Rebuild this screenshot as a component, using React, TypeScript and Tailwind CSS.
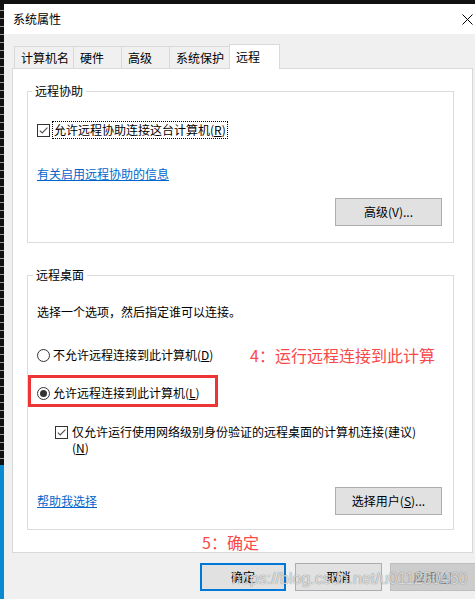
import type { ReactNode } from "react";

const CheckBox = () => (
  <span className="flex h-[13px] w-[13px] shrink-0 items-center justify-center border border-[#333333] bg-white">
    <svg width="11" height="11" viewBox="0 0 11 11">
      <path d="M1.8 5.6 L4.2 8 L9.4 2.6" fill="none" stroke="#555555" strokeWidth="1.2" />
    </svg>
  </span>
);

const Radio = ({ checked }: { checked?: boolean }) => (
  <span className="flex h-[13px] w-[13px] shrink-0 items-center justify-center rounded-full border border-[#333333] bg-white">
    {checked && <span className="h-[7px] w-[7px] rounded-full bg-[#333333]" />}
  </span>
);

const Btn = ({
  children,
  className = "",
  focused,
}: {
  children: ReactNode;
  className?: string;
  focused?: boolean;
}) => (
  <div
    className={
      "flex h-[28px] shrink-0 items-center justify-center bg-[#e1e1e1] leading-[16px] text-black " +
      (focused ? "border-2 border-[#0078d7] " : "border border-[#adadad] ") +
      className
    }
  >
    {children}
  </div>
);

const Tab = ({ label, w, active }: { label: string; w: string; active?: boolean }) =>
  active ? (
    <div className="relative z-10 -mb-px flex h-[25px] w-[51px] items-start border-x border-t border-[#d9d9d9] bg-white pl-[6px] pt-[4px] leading-[16px]">
      {label}
    </div>
  ) : (
    <div className={"flex h-[22px] items-center border-l border-t border-[#d9d9d9] bg-[#f0f0f0] pl-[6px] leading-[16px] " + w}>
      {label}
    </div>
  );

export default function App() {
  return (
    <div className="relative flex h-[599px] w-[475px] flex-col overflow-hidden bg-[#111111] font-['Noto_Sans_CJK_SC','Microsoft_YaHei',sans-serif] text-[12px] text-black">
      <div className="h-[4px] shrink-0" />
      <div className="flex min-h-0 flex-1">
        {/* desktop edge */}
        <div className="flex w-[4px] shrink-0 flex-col">
          <div className="flex-1 bg-[repeating-linear-gradient(to_bottom,#111111_0px,#111111_6px,#9a9a9a_6px,#9a9a9a_7px,#111111_7px,#111111_8px)]" />
          <div className="h-[134px] bg-[#0a8ad0]" />
        </div>

        {/* dialog */}
        <div className="flex flex-1 flex-col bg-[#f0f0f0]">
          <div className="flex h-[30px] shrink-0 items-center justify-between bg-white pl-[9px] pr-[3px] leading-[16px]">
            <span>系统属性</span>
            <svg width="11" height="11" viewBox="0 0 11 11">
              <path d="M0.5 0.5 L10.5 10.5 M10.5 0.5 L0.5 10.5" stroke="#000" strokeWidth="1" />
            </svg>
          </div>

          <div className="mt-[10px] flex h-[24px] items-end pl-[10px]">
            <Tab label="计算机名" w="w-[59px]" />
            <Tab label="硬件" w="w-[48px]" />
            <Tab label="高级" w="w-[48px]" />
            <Tab label="系统保护" w="w-[60px]" />
            <Tab label="远程" w="" active />
          </div>

          <div className="ml-[8px] h-[485px] w-[461px] border border-[#d9d9d9] bg-white">
            <fieldset className="ml-[14px] mt-[14px] w-[427px] border border-[#dcdcdc] pb-[16px]">
              <legend className="ml-[4px] px-[3px] leading-[16px]">远程协助</legend>
              <div className="mt-[22px] flex items-center pl-[9px]">
                <CheckBox />
                <span className="ml-[2px] border border-dotted border-black px-[1px] leading-[16px]">
                  允许远程协助连接这台计算机(<span className="underline">R</span>)
                </span>
              </div>
              <div className="mt-[27px] pl-[9px] leading-[16px]">
                <span className="text-[#0066cc] underline">有关启用远程协助的信息</span>
              </div>
              <div className="mt-[16px] flex justify-end pr-[11px]">
                <Btn className="w-[107px]">高级(V)...</Btn>
              </div>
            </fieldset>

            <fieldset className="ml-[14px] mt-[24px] w-[427px] border border-[#dcdcdc] pb-[14px]">
              <legend className="ml-[5px] px-[3px] leading-[16px]">远程桌面</legend>
              <div className="mt-[21px] pl-[9px] leading-[16px]">选择一个选项，然后指定谁可以连接。</div>
              <div className="mt-[27px] flex h-[16px] items-center pl-[9px]">
                <div className="flex w-[213px] shrink-0 items-center gap-[3px]">
                  <Radio />
                  <span className="leading-[16px]">
                    不允许远程连接到此计算机(<span className="underline">D</span>)
                  </span>
                </div>
                <span className="text-[16px] leading-[16px] text-[#f94848]">4：运行远程连接到此计算</span>
              </div>
              <div className="mt-[12px] h-[32px] w-[190px] border-[3px] border-[#ee3535] pl-[6px] pt-[7px]">
                <div className="flex h-[16px] items-center gap-[3px]">
                  <Radio checked />
                  <span className="leading-[16px]">
                    允许远程连接到此计算机(<span className="underline">L</span>)
                  </span>
                </div>
              </div>
              <div className="mt-[17px] flex items-start pl-[27px]">
                <div className="mt-[2px]">
                  <CheckBox />
                </div>
                <span className="ml-[4px] leading-[16px]">
                  仅允许运行使用网络级别身份验证的远程桌面的计算机连接(建议)
                  <br />(<span className="underline">N</span>)
                </span>
              </div>
              <div className="mt-[31px] flex items-center justify-between pl-[9px] pr-[11px]">
                <span className="leading-[16px] text-[#0066cc] underline">帮助我选择</span>
                <Btn className="w-[107px]">
                  <span>
                    选择用户(<span className="underline">S</span>)...
                  </span>
                </Btn>
              </div>
            </fieldset>

            <div className="mt-[4px] pl-[189px] text-[16px] leading-[16px] text-[#f94848]">5：确定</div>
          </div>

          <div className="mt-[10px] flex pl-[196px]">
            <Btn focused className="w-[86px]">
              确定
            </Btn>
            <Btn className="ml-[9px] w-[87px]">取消</Btn>
            <div className="ml-[8px] flex h-[28px] w-[86px] shrink-0 items-center justify-center border border-[#bfbfbf] bg-[#cccccc] leading-[16px] text-[#838383]">
              <span>
                应用(<span className="underline">A</span>)
              </span>
            </div>
          </div>
        </div>
      </div>

      {/* blog watermark */}
      <div className="pointer-events-none absolute left-[232px] top-[570px] font-['Liberation_Sans',Arial,sans-serif] text-[16px] leading-[18px] text-white/75 [text-shadow:0_0_1px_rgba(0,0,0,0.6)]">
        https://blog.csdn.net/u011250460
      </div>
    </div>
  );
}
